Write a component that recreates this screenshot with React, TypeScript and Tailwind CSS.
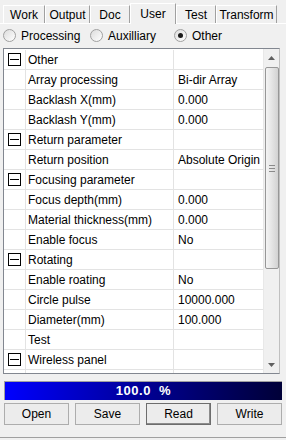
import { ReactNode } from "react";

const TABS = [
  { label: "Work", w: "w-[42px]" },
  { label: "Output", w: "w-[45px]" },
  { label: "Doc", w: "w-[40px]" },
  { label: "User", w: "w-[46px]", active: true },
  { label: "Test", w: "w-[40px]" },
  { label: "Transform", w: "w-[61px]" },
];

type Row = { label: string; value?: string; group?: boolean };

const ROWS: Row[] = [
  { label: "Other", group: true },
  { label: "Array processing", value: "Bi-dir Array" },
  { label: "Backlash X(mm)", value: "0.000" },
  { label: "Backlash Y(mm)", value: "0.000" },
  { label: "Return parameter", group: true },
  { label: "Return position", value: "Absolute Origin" },
  { label: "Focusing parameter", group: true },
  { label: "Focus depth(mm)", value: "0.000" },
  { label: "Material thickness(mm)", value: "0.000" },
  { label: "Enable focus", value: "No" },
  { label: "Rotating", group: true },
  { label: "Enable roating", value: "No" },
  { label: "Circle pulse", value: "10000.000" },
  { label: "Diameter(mm)", value: "100.000" },
  { label: "Test", value: "" },
  { label: "Wireless panel", group: true },
  { label: "Enable wheel shift", value: "No" },
];

function Radio({ label, checked }: { label: string; checked?: boolean }) {
  return (
    <div className="flex items-center gap-[5px]">
      <span className="w-[13px] h-[13px] rounded-full border border-[#a0a0a0] bg-gradient-to-br from-[#dcdcdc] to-white flex items-center justify-center">
        {checked && <span className="w-[5px] h-[5px] rounded-full bg-[#1a1a1a]" />}
      </span>
      <span>{label}</span>
    </div>
  );
}

function Btn({ children, focus }: { children: ReactNode; focus?: boolean }) {
  return (
    <div
      className={`h-[22px] flex items-center justify-center bg-[#ececec] border ${
        focus ? "border-[#6d6d6d] shadow-[inset_-1px_-1px_0_#8c8c8c]" : "border-[#adadad]"
      }`}
    >
      {children}
    </div>
  );
}

export default function App() {
  return (
    <div className="w-[286px] h-[440px] bg-[#f0f0f0] text-[12px] text-black overflow-hidden font-['Liberation_Sans',Arial,sans-serif] relative">
      {/* tabs */}
      <div className="flex items-end h-[23px] pl-[3px]">
        {TABS.map((t) => (
          <div
            key={t.label}
            className={`${t.w} flex items-center justify-center border-l border-t border-r border-l-white border-t-white border-r-[#a0a0a0] whitespace-nowrap ${
              t.active ? "h-[21px] bg-[#f0f0f0] relative z-10 -mb-px" : "h-[18px] bg-[#f0f0f0]"
            }`}
          >
            {t.label}
          </div>
        ))}
      </div>
      <div className="border-t border-white h-px" />

      {/* radio row */}
      <div className="flex items-center h-[23px] pl-[3px]">
        <div className="w-[87px]">
          <Radio label="Processing" />
        </div>
        <div className="w-[84px]">
          <Radio label="Auxilliary" />
        </div>
        <Radio label="Other" checked />
      </div>

      {/* property grid */}
      <div className="mx-[3px] mt-[1px] w-[277px] h-[326px] border border-[#828790] border-r-[#c0c0c0] bg-white flex">
        <div className="flex-1 overflow-hidden pt-[1px]">
          {ROWS.map((r) => (
            <div key={r.label} className="flex h-[20px] border-b border-[#e3e3e3]">
              <div className="w-[22px] shrink-0 flex items-center pl-[4px] border-r border-[#e3e3e3]">
                {r.group && (
                  <span className="w-[13px] h-[13px] border border-black flex items-center justify-center">
                    <span className="w-[9px] h-px bg-black" />
                  </span>
                )}
              </div>
              <div className="w-[148px] shrink-0 pl-[2px] flex items-center border-r border-[#e3e3e3] whitespace-nowrap overflow-hidden">
                {r.label}
              </div>
              <div className="flex-1 pl-[4px] flex items-center whitespace-nowrap overflow-hidden">
                {r.value}
              </div>
            </div>
          ))}
        </div>
        {/* scrollbar */}
        <div className="w-[16px] shrink-0 bg-[#f0f0f0] flex flex-col items-center border-l border-[#e8e8e8]">
          <div className="h-[17px] w-full flex items-center justify-center">
            <svg width="7" height="4" viewBox="0 0 7 4">
              <path d="M3.5 0 L7 4 L0 4 Z" fill="#606060" />
            </svg>
          </div>
          <div className="mt-[1px] w-[14px] h-[202px] rounded-[2px] border border-[#979797] bg-gradient-to-r from-[#f4f4f4] via-[#e4e4e4] to-[#d2d2d2] flex flex-col items-center justify-center gap-[2px]">
            <span className="w-[6px] h-px bg-[#8a8a8a]" />
            <span className="w-[6px] h-px bg-[#8a8a8a]" />
            <span className="w-[6px] h-px bg-[#8a8a8a]" />
          </div>
          <div className="flex-1" />
          <div className="h-[17px] w-full flex items-center justify-center">
            <svg width="7" height="4" viewBox="0 0 7 4">
              <path d="M0 0 L7 0 L3.5 4 Z" fill="#606060" />
            </svg>
          </div>
        </div>
      </div>

      {/* progress */}
      <div className="mx-[4px] mt-[7px] h-[19px] bg-gradient-to-r from-[#0000ff] to-[#000038] flex items-center justify-center text-white font-bold text-[13px] tracking-[0.5px] border-t border-l border-[#a0a0a0]">
        <span className="whitespace-pre">100.0  %</span>
      </div>

      {/* buttons */}
      <div className="grid grid-cols-4 gap-[6px] mx-[4px] mt-[3px]">
        <Btn>Open</Btn>
        <Btn>Save</Btn>
        <Btn focus>Read</Btn>
        <Btn>Write</Btn>
      </div>

      <div className="absolute left-0 right-0 top-[437px] h-px bg-[#a0a0a0]" />
    </div>
  );
}
